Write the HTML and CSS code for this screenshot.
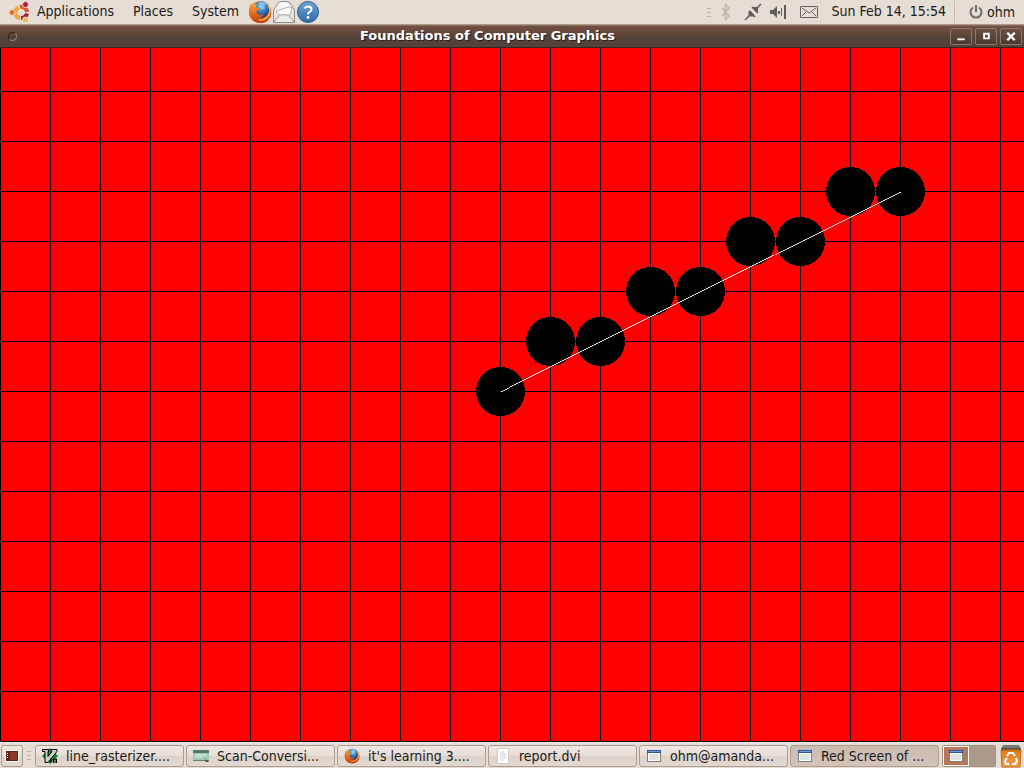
FILE: index.html
```html
<!DOCTYPE html>
<html lang="en">
<head>
<meta charset="utf-8">
<meta name="viewport" content="width=device-width, initial-scale=1">
<title>Foundations of Computer Graphics</title>
<link rel="stylesheet" href="styles.css">
</head>
<body>
<svg class="defs" aria-hidden="true">
  <defs>
    <linearGradient id="fox" x1="0" y1="0" x2="0" y2="1"><stop offset="0" stop-color="#f2a03c"/><stop offset=".5" stop-color="#e06a1a"/><stop offset="1" stop-color="#c03c10"/></linearGradient>
    <radialGradient id="globe" cx=".5" cy=".3" r=".7"><stop offset="0" stop-color="#7cc4ee"/><stop offset=".6" stop-color="#2c6cb4"/><stop offset="1" stop-color="#123a7c"/></radialGradient>
    <linearGradient id="helpblue" x1="0" y1="0" x2="0" y2="1"><stop offset="0" stop-color="#6fa3d6"/><stop offset="1" stop-color="#2f6aa8"/></linearGradient>
    <linearGradient id="paper" x1="0" y1="0" x2="0" y2="1"><stop offset="0" stop-color="#ffffff"/><stop offset="1" stop-color="#d4d4d2"/></linearGradient>
    <linearGradient id="bin" x1="0" y1="0" x2="0" y2="1"><stop offset="0" stop-color="#d9771c"/><stop offset="1" stop-color="#f3a548"/></linearGradient>
    <symbol id="firefox" viewBox="0 0 24 24">
      <circle cx="12" cy="12" r="11" fill="url(#fox)"/>
      <circle cx="13" cy="9.500" r="8.200" fill="url(#globe)"/>
      <path d="M11 2.500c3-1 6 0 8 2l-3 1 1 3-3 1-3-3z" fill="#8ed0f4" opacity=".7"/>
      <path d="M2.500 4c1 1 1.500 1.200 2.500 1 1.500-1 3-1.200 4.500-.8-1.500 1-1.800 2-1.500 3.300 1 .6 2.500.3 3.500.8-.3 1.400-2 2-3 3 0 1.500.5 2.500 2 3.300 2 .8 3.500-.4 5.200-.3-.7 2.200-3 3.400-5.500 3.200 3.600 2.500 9 .3 10.600-4.500.8-2.700.2-6-.8-8 2.600 2.500 4.300 7 2.700 11.500C20.500 21.500 16 23.800 11 23 5 22 1 17.500 1 11.500 1 8.500 1.500 6 2.500 4z" fill="url(#fox)"/>
      <path d="M20 5c2.500 4 2.500 9-1 12.500-2.300 2.200-5 3-8 2.300" fill="none" stroke="#f8c44a" stroke-width="1.200"/>
    </symbol>
    <symbol id="window" viewBox="0 0 14 12">
      <rect x=".5" y=".5" width="13" height="11" fill="#fff" stroke="#777d7b"/>
      <rect width="14" height="3" fill="#2a5599"/><rect x="1" y="1" width="12" height="1" fill="#6f9ad2"/>
      <rect x="2" y="4" width="10" height="6" fill="#dfe3df"/>
    </symbol>
  </defs>
</svg>

<header class="panel panel-top">
  <svg class="ubuntu" viewBox="0 0 22 22" aria-hidden="true">
    <g fill="none" stroke-width="4">
      <path d="M7.500 12A5.500 5.500 0 0 1 10.500 6.500" stroke="#f0a33c"/>
      <path d="M12 6A5.700 5.700 0 0 1 19 11" stroke="#d9582c"/>
      <path d="M19 12.500A6 6 0 0 1 13 17" stroke="#a81c30"/>
      <path d="M7.500 12.500A5.500 5.500 0 0 0 12 17" stroke="#f0a33c"/>
    </g>
    <g stroke="#e6ddd4"><circle cx="4" cy="11.500" r="3" fill="#ea6d1f"/><circle cx="17.500" cy="3.500" r="3" fill="#b02040"/><circle cx="17.500" cy="19" r="3" fill="#f2bb50"/></g>
  </svg>
  <nav class="menus">
    <button class="menu">Applications</button>
    <button class="menu">Places</button>
    <button class="menu">System</button>
  </nav>
  <div class="launchers">
    <button class="launcher" aria-label="Firefox"><svg viewBox="0 0 24 24"><use href="#firefox"/></svg></button>
    <button class="launcher" aria-label="Mail"><svg viewBox="0 0 24 24"><path d="M1.500 10 7 2q5-1 10 0l5.500 8v12.500h-21z" fill="url(#paper)" stroke="#8c8c88"/><path d="m4 11 13-4 3 1-2 7H7z" fill="#fff" stroke="#b0b0ac"/><path d="m2 22 6-7h8l6 7" fill="#ececea" stroke="#aaaaa6"/></svg></button>
    <button class="launcher" aria-label="Help"><svg viewBox="0 0 24 24"><circle cx="12" cy="12" r="10.500" fill="url(#helpblue)" stroke="#2b5f9a"/><path d="M8.500 8.500q1-2 3.800-2 3.200.2 3.200 2.800 0 1.600-1.800 2.600-1.700.8-1.700 2.600" fill="none" stroke="#fff" stroke-width="2"/><circle cx="12" cy="17.500" r="1.400" fill="#fff"/></svg></button>
  </div>
  <div class="tray">
    <span class="grip"></span>
    <svg class="bt" viewBox="0 0 10 18" aria-hidden="true"><path d="m1 5 7 8-3.500 3.500v-15L8 5l-7 8" fill="none" stroke="#bdb6ae" stroke-width="1.500"/></svg>
    <svg class="plug" viewBox="0 0 18 18" aria-hidden="true"><path d="m1 17 5-5M12 6l5-5M5 8l6 6M8 4l6 6" fill="none" stroke="#5c5c5a" stroke-width="1.500"/><path d="m4.500 12 0-3 1.500-1.500 4.500 4.500L9 13.500H6zM8.500 5 10 4h3l1 1v3l-1.500 1.500z" fill="#5c5c5a"/></svg>
    <svg class="volume" viewBox="0 0 16 16" aria-hidden="true"><path d="M0 6h3l4-4v12l-4-4H0zM8 7h2v3H8zM11 4h1v8h-1zM14 1h2v14h-2z" fill="#5c5c5a"/></svg>
    <svg class="mail" viewBox="0 0 18 12" aria-hidden="true"><path d="M.5.500h17v11H.5zM2 2l7 5 7-5M2 10l4-4m6 0 4 4" fill="none" stroke="#646462"/></svg>
    <time class="clock" datetime="15:54">Sun Feb 14, 15:54</time>
    <span class="divider"></span>
    <button class="session"><svg viewBox="0 0 14 14" aria-hidden="true"><path d="M4 2.500a5.500 5.500 0 1 0 6 0M7 0v7" fill="none" stroke="#6b6b69" stroke-width="2"/></svg>ohm</button>
  </div>
</header>

<section class="window">
  <div class="titlebar">
    <span class="pip"></span>
    <h1 class="title">Foundations of Computer Graphics</h1>
    <div class="controls">
      <button class="control" aria-label="Minimize"><svg viewBox="0 0 20 16"><path d="M6 10h8v2H6z" fill="#fff"/></svg></button>
      <button class="control" aria-label="Maximize"><svg viewBox="0 0 20 16"><path d="M7 4h7v7H7zM9 6v3h3V6z" fill="#fff" fill-rule="evenodd"/></svg></button>
      <button class="control" aria-label="Close"><svg viewBox="0 0 20 16"><path d="m6 4 8 8m0-8-8 8" stroke="#fff" stroke-width="2.500"/></svg></button>
    </div>
  </div>
  <main class="stage">
    <svg class="raster" viewBox="0 0 1024 694" preserveAspectRatio="xMinYMax slice" shape-rendering="crispEdges" role="img" aria-label="Rasterized line on a grid">
      <defs><pattern id="grid" y="43" width="50" height="50" patternUnits="userSpaceOnUse"><path d="M0 0h50v1H1v49H0z"/></pattern></defs>
      <rect width="1024" height="694" fill="#f00"/>
      <rect width="1024" height="694" fill="url(#grid)"/>
      <g>
        <circle cx="500.500" cy="343.500" r="24.500"/>
        <circle cx="550.500" cy="293.500" r="24.500"/><circle cx="600.500" cy="293.500" r="24.500"/>
        <circle cx="650.500" cy="243.500" r="24.500"/><circle cx="700.500" cy="243.500" r="24.500"/>
        <circle cx="750.500" cy="193.500" r="24.500"/><circle cx="800.500" cy="193.500" r="24.500"/>
        <circle cx="850.500" cy="143.500" r="24.500"/><circle cx="900.500" cy="143.500" r="24.500"/>
      </g>
      <path d="M500.500 343.500l400-200" stroke="#fff" stroke-width=".89"/>
    </svg>
  </main>
</section>

<footer class="panel panel-bottom">
  <button class="desktop" aria-label="Show desktop"><svg viewBox="0 0 14 12"><rect width="14" height="12" fill="#fff"/><rect x="1" y="1" width="12" height="10" fill="#5f2416"/><rect x="5" y="2" width="7" height="8" fill="#8b3826"/><path d="M2 3h1v1H2zM2 5h1v1H2zM2 7h1v1H2z" fill="#fff"/></svg></button>
  <span class="grip"></span>
  <nav class="tasks">
    <button class="task"><svg viewBox="0 0 16 16"><path d="m8 0 8 8-8 8-8-8z" fill="#138a2c"/><path d="M.5 1.500h6v2H6v5l4-5H9v-2h6v2l-9 11H3v-11H.5z" fill="#ccc" stroke="#000"/><path d="M9 10v5M11.500 15v-4h3v4M13 11v4" fill="none" stroke="#000"/></svg><span>line_rasterizer....</span></button>
    <button class="task"><svg viewBox="0 0 16 16"><path d="M0 2h16v11H0z" fill="#9ccab4"/><path d="M0 2h16v3H0z" fill="#537a68"/><path d="M2 7h12M2 9h8" stroke="#e3f4eb"/><path d="M0 12h16v1H0z" fill="#5d8371"/><path d="m12 11 4 3h-3z" fill="#503028"/></svg><span>Scan-Conversi...</span></button>
    <button class="task"><svg viewBox="0 0 24 24"><use href="#firefox"/></svg><span>it's learning 3....</span></button>
    <button class="task"><svg viewBox="0 0 16 16"><path d="M2.500.500h11v15h-11z" fill="#fff" stroke="#d0ccc8"/><path d="M5 4h4M5 6h6M5 8h6M5 10h6M5 12h4" stroke="#d3d3d3"/></svg><span>report.dvi</span></button>
    <button class="task"><svg viewBox="0 0 16 16"><use href="#window" x="1" y="2" width="14" height="12"/></svg><span>ohm@amanda...</span></button>
    <button class="task active"><svg viewBox="0 0 16 16"><use href="#window" x="1" y="2" width="14" height="12"/></svg><span>Red Screen of ...</span></button>
  </nav>
  <div class="workspaces">
    <button class="workspace current" aria-label="Workspace 1"><svg viewBox="0 0 14 12"><use href="#window" width="14" height="12"/></svg></button>
    <button class="workspace" aria-label="Workspace 2"></button>
  </div>
  <button class="trash" aria-label="Trash"><svg viewBox="0 0 22 24"><path d="M3 1h16l2 4H1z" fill="#777b74"/><path d="M1 4h20v2H1z" fill="#50544e"/><path d="M1 6h20l-1 17H2z" fill="url(#bin)" stroke="#bf6814"/><path d="m7 12 2-3h4l2 3M16 14l1 3-2 3h-3M9 20H6l-1-3 2-3" fill="none" stroke="#fff" stroke-width="2"/></svg></button>
</footer>
</body>
</html>
```
FILE: styles.css
```css
* { box-sizing: border-box; }

body {
  margin: 0;
  height: 100vh;
  display: flex;
  flex-direction: column;
  overflow: hidden;
  background: #e6ddd4;
  color: #1a1a1a;
  font: 14px/18px "DejaVu Sans Condensed", "DejaVu Sans", sans-serif;
}

button {
  margin: 0;
  padding: 0;
  border: 0;
  background: none;
  color: inherit;
  font: inherit;
}

svg { display: block; flex: none; }
.defs { position: absolute; width: 0; height: 0; }

.panel { display: flex; align-items: center; flex: none; }

.panel-top {
  height: 25px;
  padding: 0 9px 0 8px;
  border-bottom: 1px solid #a89a88;
}

.ubuntu { width: 22px; height: 22px; }
.menus { display: flex; gap: 19px; margin-left: 7px; padding-bottom: 2px; }
.launchers { display: flex; margin-left: 9px; }
.launcher svg { width: 24px; height: 24px; }

.tray { display: flex; align-items: center; margin-left: auto; }
.grip {
  width: 4px;
  height: 9px;
  background: repeating-linear-gradient(#c4b3a0 0 1px, transparent 1px 4px);
}
.bt { width: 10px; height: 18px; margin-left: 10px; }
.plug { width: 18px; height: 18px; margin-left: 13px; }
.volume { width: 16px; height: 16px; margin-left: 8px; }
.mail { width: 18px; height: 12px; margin-left: 14px; }
.clock { margin-left: 14px; padding-bottom: 2px; }
.divider { width: 1px; height: 22px; margin-left: 8px; background: #c8b8a8; }
.session { display: flex; align-items: center; gap: 4px; margin-left: 14px; }
.session svg { width: 14px; height: 14px; }

.window { flex: 1; min-height: 0; display: flex; flex-direction: column; }

.titlebar {
  display: flex;
  align-items: center;
  flex: none;
  height: 23px;
  padding: 0 2px 0 8px;
  border-top: 1px solid #8c6c5a;
  border-bottom: 1px solid #34261f;
  background: linear-gradient(#73503f, #5c4338 50%, #54413a 50%, #54413a);
  color: #fff;
}
.pip {
  width: 9px;
  height: 9px;
  border: 1px solid #a08c80;
  border-color: #2e221c #a08c80 #a08c80 #2e221c;
  border-radius: 50%;
}
.title {
  flex: 1;
  margin: 0;
  padding: 0 0 2px 8px;
  text-align: center;
  font: bold 13px/18px "DejaVu Sans", sans-serif;
  text-shadow: 1px 1px #2e201a;
}
.controls { display: flex; gap: 3px; }
.control {
  width: 22px;
  height: 17px;
  border: 1px solid #8d786c;
  border-radius: 2px;
  background: linear-gradient(#6c5145, #49382f);
}
.control svg { width: 20px; height: 15px; }

.stage { flex: 1; min-height: 0; background: #f00; }
.raster { width: 100%; height: 100%; }

.panel-bottom {
  height: 26px;
  padding: 0 2px 0 1px;
  border-top: 1px solid #f7f2ec;
}
.desktop, .task {
  border: 1px solid #ab9c90;
  border-radius: 3px;
  background: linear-gradient(#efe8e2, #e6ddd6 50%, #ddd2c9 50%, #e3d9d1);
}
.desktop { width: 22px; height: 22px; padding: 0 3px; }
.desktop svg { width: 14px; height: 12px; }
.panel-bottom .grip { margin: 0 4px; }
.tasks { flex: 1; min-width: 0; display: flex; gap: 2px; }
.task {
  flex: 1 1 0;
  min-width: 0;
  height: 22px;
  display: flex;
  align-items: center;
  gap: 8px;
  padding: 0 6px;
}
.task svg { width: 16px; height: 16px; }
.task span { white-space: nowrap; overflow: hidden; }
.active { background: linear-gradient(#cabcb0, #d2c4b9); }

.workspaces { display: flex; height: 22px; margin: 0 4px 0 3px; background: #ac9a8a; border: 1px solid #a3917f; border-radius: 2px; }
.workspace { width: 26px; height: 20px; }
.current { padding: 0 5px; border: 1px solid #fff; background: #ba7659; }
.current svg { width: 14px; height: 12px; }
.trash svg { width: 22px; height: 24px; }
```
